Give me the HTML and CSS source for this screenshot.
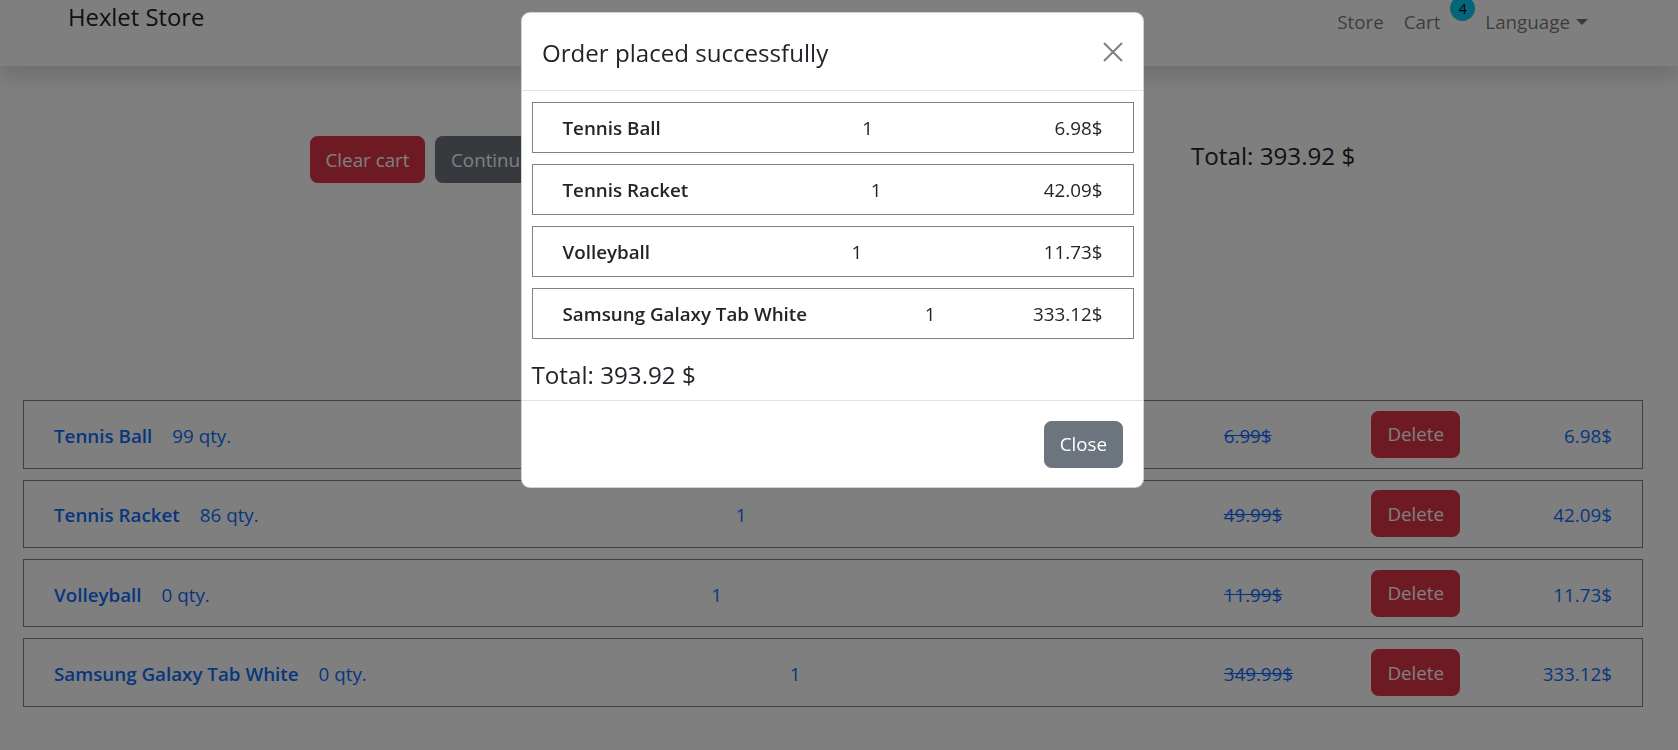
FILE: index.html
```html
<!DOCTYPE html>
<html lang="en">
<head>
<meta charset="utf-8">
<title>Hexlet Store</title>
<link rel="stylesheet" href="styles.css">
</head>
<body>
<nav class="navbar">
  <a class="brand" href="#">Hexlet Store</a>
  <ul class="nav">
    <li><a class="nav-link" href="#">Store</a></li>
    <li><a class="nav-link cart-link" href="#">Cart<span class="badge">4</span></a></li>
    <li><a class="nav-link" href="#">Language<span class="caret"></span></a></li>
  </ul>
</nav>

<main class="container">
  <section class="cart-summary">
    <div class="actions">
      <button class="btn btn-danger btn-clear">Clear cart</button>
      <button class="btn btn-secondary">Continue shopping</button>
    </div>
    <h5 class="total">Total: 393.92 $</h5>
  </section>

  <ul class="cart-list">
    <li class="cart-item">
      <div class="item-info"><a class="item-name" href="#">Tennis Ball</a><span class="item-stock">99 qty.</span></div>
      <span class="item-count">1</span>
      <div class="item-prices"><s class="old-price">6.99$</s><button class="btn btn-danger">Delete</button><span class="new-price">6.98$</span></div>
    </li>
    <li class="cart-item">
      <div class="item-info"><a class="item-name" href="#">Tennis Racket</a><span class="item-stock">86 qty.</span></div>
      <span class="item-count">1</span>
      <div class="item-prices"><s class="old-price">49.99$</s><button class="btn btn-danger">Delete</button><span class="new-price">42.09$</span></div>
    </li>
    <li class="cart-item">
      <div class="item-info"><a class="item-name" href="#">Volleyball</a><span class="item-stock">0 qty.</span></div>
      <span class="item-count">1</span>
      <div class="item-prices"><s class="old-price">11.99$</s><button class="btn btn-danger">Delete</button><span class="new-price">11.73$</span></div>
    </li>
    <li class="cart-item">
      <div class="item-info"><a class="item-name" href="#">Samsung Galaxy Tab White</a><span class="item-stock">0 qty.</span></div>
      <span class="item-count">1</span>
      <div class="item-prices"><s class="old-price">349.99$</s><button class="btn btn-danger">Delete</button><span class="new-price">333.12$</span></div>
    </li>
  </ul>
</main>

<div class="backdrop"></div>

<div class="modal" role="dialog">
  <div class="modal-header">
    <h5 class="modal-title">Order placed successfully</h5>
    <button class="btn-close" aria-label="Close">
      <svg viewBox="0 0 20 20" width="20" height="20"><path d="M1.5 1.5 L18.5 18.5 M18.5 1.5 L1.5 18.5" stroke="#000" stroke-width="2" stroke-linecap="round" fill="none"/></svg>
    </button>
  </div>
  <div class="modal-body">
    <div class="order-item"><span class="order-name">Tennis Ball</span><span class="order-qty">1</span><span class="order-price">6.98$</span></div>
    <div class="order-item"><span class="order-name">Tennis Racket</span><span class="order-qty">1</span><span class="order-price">42.09$</span></div>
    <div class="order-item"><span class="order-name">Volleyball</span><span class="order-qty">1</span><span class="order-price">11.73$</span></div>
    <div class="order-item"><span class="order-name">Samsung Galaxy Tab White</span><span class="order-qty">1</span><span class="order-price">333.12$</span></div>
    <h5 class="modal-total">Total: 393.92 $</h5>
  </div>
  <div class="modal-footer">
    <button class="btn btn-secondary">Close</button>
  </div>
</div>
</body>
</html>
```

FILE: styles.css
```css
* { box-sizing: border-box; }

html, body {
  margin: 0;
  padding: 0;
  background: #fff;
}

body {
  font-family: "Open Sans", "Noto Sans", sans-serif;
  font-size: 18.8px;
  line-height: 30px;
  color: #212529;
  overflow: hidden;
  height: 750px;
}

a { text-decoration: none; }
ul { list-style: none; margin: 0; padding: 0; }
h5 { margin: 0; font-weight: 400; }

/* Navbar */
.navbar {
  position: relative;
  z-index: 1;
  height: 66px;
  display: flex;
  justify-content: space-between;
  align-items: flex-start;
  padding: 0 80px 0 68px;
  background: #fff;
  box-shadow: 0 10px 20px rgba(0, 0, 0, 0.15);
}

.brand {
  font-size: 23.8px;
  line-height: 30px;
  padding-top: 2px;
  color: rgba(0, 0, 0, 0.9);
}

.nav {
  display: flex;
  margin-top: 7px;
}

.nav-link {
  display: block;
  position: relative;
  padding: 0 10px;
  color: rgba(0, 0, 0, 0.55);
  font-size: 18.8px;
  line-height: 30px;
}

.cart-link { margin-right: 25px; }

.badge {
  position: absolute;
  left: 100%;
  top: -11px;
  width: 25px;
  height: 25px;
  border-radius: 50%;
  background: #0dcaf0;
  color: #000;
  font-size: 14px;
  line-height: 25px;
  text-align: center;
}

.caret {
  display: inline-block;
  margin-left: 6px;
  vertical-align: 4px;
  border-top: 6px solid;
  border-left: 6px solid transparent;
  border-right: 6px solid transparent;
}

/* Buttons */
.btn {
  font-family: inherit;
  font-size: 18.8px;
  line-height: 30px;
  padding: 7.5px 15px;
  border: 1px solid transparent;
  border-radius: 7.5px;
  color: #fff;
  white-space: nowrap;
  cursor: pointer;
}
.btn-danger { background: #dc3545; border-color: #dc3545; }
.btn-secondary { background: #6c757d; border-color: #6c757d; }

/* Main */
.container {
  margin: 0 35px 0 23px;
}

.cart-summary {
  display: grid;
  grid-template-columns: 1168px 1fr;
  align-items: start;
  margin-top: 70px;
}

.actions {
  display: flex;
  gap: 10px;
  padding-left: 287px;
}

.btn-clear {
  width: 115px;
  padding-left: 0;
  padding-right: 0;
}

.total {
  font-size: 24.2px;
  line-height: 30px;
  margin-top: 5px;
  color: #212529;
}

.cart-list { margin-top: 217.2px; }

.cart-item {
  display: flex;
  justify-content: space-between;
  align-items: center;
  border: 1px solid #808080;
  padding: 9.7px 30px;
  margin-bottom: 11px;
  color: #0d6efd;
}

.item-info, .item-count, .old-price, .new-price { padding-top: 3px; }

.item-name { color: #0d6efd; font-weight: 600; }
.item-stock { margin-left: 20px; }

.item-prices {
  display: flex;
  align-items: center;
  width: 388.3px;
}
.old-price { width: 147.7px; }
.new-price { flex: 1; text-align: right; }

/* Backdrop + modal */
.backdrop {
  position: fixed;
  inset: 0;
  background: rgba(0, 0, 0, 0.5);
  z-index: 10;
}

.modal {
  position: fixed;
  z-index: 20;
  top: 12px;
  left: 521px;
  width: 623px;
  background: #fff;
  border: 1px solid rgba(0, 0, 0, 0.175);
  border-radius: 9px;
}

.modal-header {
  display: flex;
  justify-content: space-between;
  align-items: center;
  padding: 20.5px 20px 18.5px;
  border-bottom: 1px solid #dee2e6;
}

.modal-title {
  font-size: 24.1px;
  line-height: 37.5px;
  color: #212529;
}

.btn-close {
  width: 20px;
  height: 20px;
  padding: 0;
  border: 0;
  background: transparent;
  opacity: 0.5;
}
.btn-close svg { display: block; }

.modal-body {
  padding: 11px 9.5px 9.5px;
}

.order-item {
  display: flex;
  justify-content: space-between;
  border: 1px solid #808080;
  padding: 10.5px 30px 8.5px;
  margin-bottom: 11px;
}
.order-name { font-weight: 600; }
.order-qty { margin-left: 20px; }

.modal-total {
  font-size: 24.2px;
  line-height: 30px;
  margin-top: 21.5px;
  color: #212529;
}

.modal-footer {
  display: flex;
  justify-content: flex-end;
  padding: 20px 20px 19.5px;
  border-top: 1px solid #dee2e6;
}
```
